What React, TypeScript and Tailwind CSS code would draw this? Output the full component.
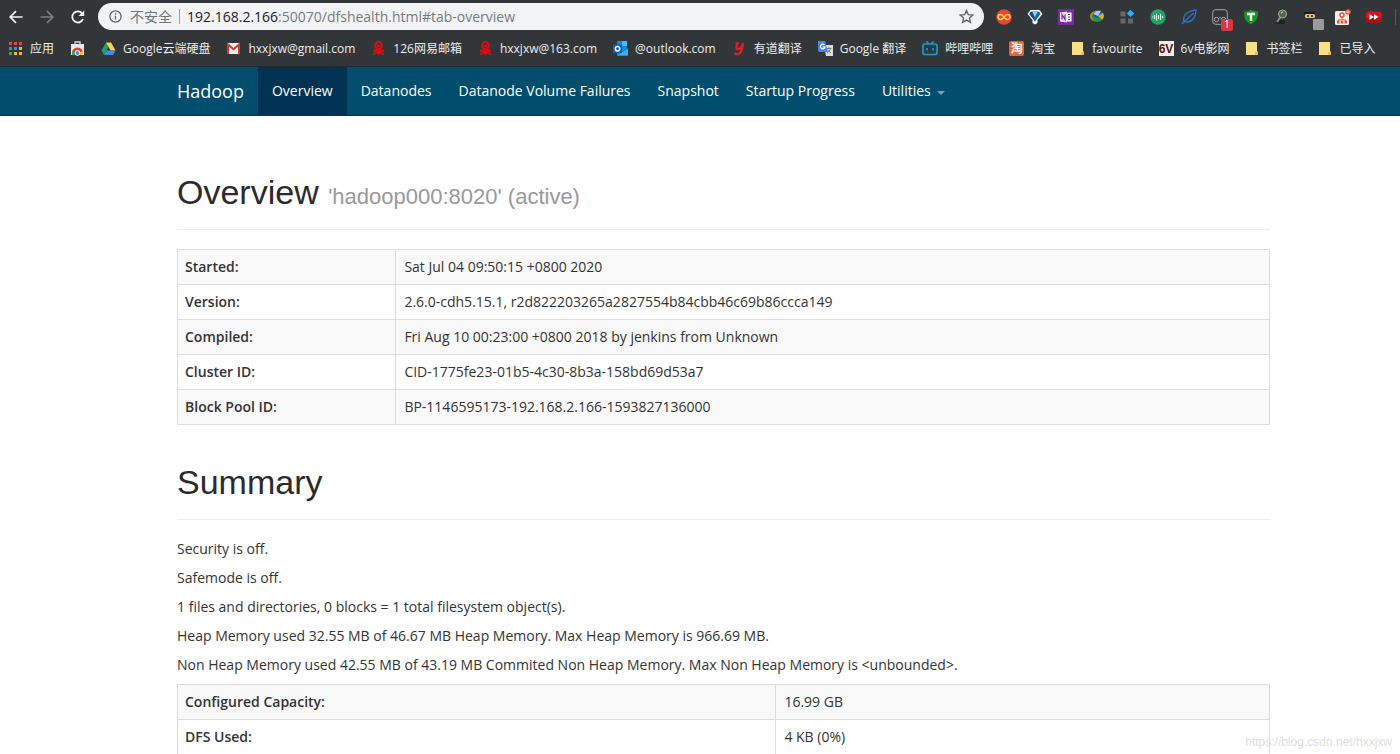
import type { ReactNode } from "react";

interface BookmarkProps {
  icon: ReactNode;
  label?: string;
}

interface InfoRow {
  name: string;
  value: string;
}

const overviewRows: InfoRow[] = [
  { name: "Started:", value: "Sat Jul 04 09:50:15 +0800 2020" },
  { name: "Version:", value: "2.6.0-cdh5.15.1, r2d822203265a2827554b84cbb46c69b86ccca149" },
  { name: "Compiled:", value: "Fri Aug 10 00:23:00 +0800 2018 by jenkins from Unknown" },
  { name: "Cluster ID:", value: "CID-1775fe23-01b5-4c30-8b3a-158bd69d53a7" },
  { name: "Block Pool ID:", value: "BP-1146595173-192.168.2.166-1593827136000" },
];

const summaryRows: InfoRow[] = [
  { name: "Configured Capacity:", value: "16.99 GB" },
  { name: "DFS Used:", value: "4 KB (0%)" },
];

const summaryLines = [
  "Security is off.",
  "Safemode is off.",
  "1 files and directories, 0 blocks = 1 total filesystem object(s).",
  "Heap Memory used 32.55 MB of 46.67 MB Heap Memory. Max Heap Memory is 966.69 MB.",
  "Non Heap Memory used 42.55 MB of 43.19 MB Commited Non Heap Memory. Max Non Heap Memory is <unbounded>.",
];

const navLinks = ["Datanodes", "Datanode Volume Failures", "Snapshot", "Startup Progress"];

export default function App() {
  return (
    <div className="flex h-screen flex-col overflow-hidden bg-white font-['Open_Sans','Noto_Sans_CJK_SC',sans-serif] text-[#333333]">
      <header className="border-b border-[#1f2a30] bg-[#323639]">
        <Toolbar />
        <BookmarksBar />
      </header>
      <NavBar />
      <main className="relative flex-1 overflow-hidden pt-[55px] pr-[130px] pl-[177px] text-sm">
        <h1 className="border-b border-[#eeeeee] pb-[15px] font-['Liberation_Sans',sans-serif] text-[34px] leading-[43px] text-[#2b2b2b]">
          Overview <small className="text-[22px] leading-none text-[#999999]">'hadoop000:8020' (active)</small>
        </h1>
        <InfoTable rows={overviewRows} nameWidth="w-1/5" />

        <h1 className="mt-[36px] border-b border-[#eeeeee] pb-[15px] font-['Liberation_Sans',sans-serif] text-[34px] leading-[43px] text-[#2b2b2b]">
          Summary
        </h1>
        <div className="mt-[19px] flex flex-col gap-[9px] leading-5">
          {summaryLines.map((line) => (
            <p key={line}>{line}</p>
          ))}
        </div>
        <InfoTable rows={summaryRows} nameWidth="w-[54.8%]" tight />

        <span className="absolute right-2 bottom-1 font-['Liberation_Sans',sans-serif] text-xs text-[#dedede]">
          https://blog.csdn.net/hxxjxw
        </span>
      </main>
    </div>
  );
}

const InfoTable = ({ rows, nameWidth, tight }: { rows: InfoRow[]; nameWidth: string; tight?: boolean }) => {
  return (
    <table className={`${tight ? "mt-[9px]" : "mt-[19px]"} w-full table-fixed border-collapse border border-[#dddddd]`}>
      <tbody>
        {rows.map((row) => (
          <tr key={row.name} className="h-[35px] odd:bg-[#f9f9f9]">
            <th scope="row" className={`${nameWidth} border border-[#dddddd] px-[7px] text-left font-semibold`}>
              {row.name}
            </th>
            <td className="border border-[#dddddd] px-2">{row.value}</td>
          </tr>
        ))}
      </tbody>
    </table>
  );
};

const NavBar = () => {
  return (
    <nav className="flex h-[49px] items-stretch border-b border-[#0a3550] bg-[#004d6e] pl-[177px] text-sm text-white">
      <a href="#hadoop" className="flex items-center pr-[14px] text-lg">
        Hadoop
      </a>
      <a href="#tab-overview" className="flex items-center bg-[#003253] px-[14px]">
        Overview
      </a>
      {navLinks.map((link) => (
        <a key={link} href="#tab" className="flex items-center pr-[13px] pl-[14px]">
          {link}
        </a>
      ))}
      <button type="button" className="flex items-center gap-[6px] px-[14px]">
        Utilities
        <svg width="8" height="4" viewBox="0 0 8 4" className="mt-1">
          <path d="M0 0h8L4 4z" fill="#8b9aa5" />
        </svg>
      </button>
    </nav>
  );
};

const Toolbar = () => {
  return (
    <div className="flex h-[33px] items-center">
      <div className="flex w-[98px] items-center gap-[15px] pl-2">
        <button type="button" aria-label="Back">
          <Arrow color="#f1f3f4" />
        </button>
        <button type="button" aria-label="Forward" className="rotate-180">
          <Arrow color="#7d8083" />
        </button>
        <button type="button" aria-label="Reload">
          <svg width="16" height="16" viewBox="0 0 16 16" fill="none" stroke="#f1f3f4" strokeWidth="1.8">
            <path d="M13 10.2A5.6 5.6 0 1 1 12.2 4.3L13.2 5.4" />
            <path d="M14.2 1.4v5.6H8.6z" fill="#f1f3f4" stroke="none" />
          </svg>
        </button>
      </div>
      <div className="flex h-[27px] flex-1 items-center rounded-full bg-[#f1f3f4] pr-[10px] pl-[11px] text-sm">
        <svg width="13" height="13" viewBox="0 0 13 13" fill="none" stroke="#5f6368" strokeWidth="1.3">
          <circle cx="6.5" cy="6.5" r="5.6" />
          <path d="M6.5 5.8v3.7M6.5 3.3v1.4" />
        </svg>
        <span className="ml-2 text-[#70757a]">不安全</span>
        <span className="mx-[7px] h-[15px] w-px bg-[#9aa0a6]" />
        <p className="flex-1 text-[#777b80]">
          <span className="text-[#202124]">192.168.2.166</span>:50070/dfshealth.html#tab-overview
        </p>
        <button type="button" aria-label="Bookmark this page">
          <svg width="15" height="15" viewBox="0 0 16 16" fill="none" stroke="#5f6368" strokeWidth="1.4">
            <path d="M8 1.5l1.9 4.500 4.900.4-3.700 3.200 1.100 4.700L8 11.800l-4.200 2.500 1.100-4.700L1.200 6.400l4.900-.4z" />
          </svg>
        </button>
      </div>
      <div className="ml-[5px] grid w-[400px] grid-cols-13 justify-items-center">
        <ExtensionIcons />
      </div>
      <span className="mr-1 ml-[6px] h-4 w-px bg-[#5a5e61]" />
    </div>
  );
};

const Arrow = ({ color }: { color: string }) => (
  <svg width="16" height="16" viewBox="0 0 16 16" fill="none" stroke={color} strokeWidth="1.7">
    <path d="M14.500 8H2.500M8 2.200L2.200 8L8 13.800" />
  </svg>
);

const ExtensionIcons = () => (
  <>
    <svg width="16" height="16" viewBox="0 0 16 16">
      <circle cx="8" cy="8" r="7.700" fill="#ee4438" />
      <path d="M8 8C6.500 6 5.700 5.500 4.600 5.500a2.500 2.500 0 0 0 0 5C5.700 10.500 6.500 10 8 8s2.300-2.500 3.400-2.500a2.500 2.500 0 0 1 0 5C10.300 10.500 9.500 10 8 8z" fill="none" stroke="#ffd84f" strokeWidth="1.500" />
    </svg>
    <svg width="16" height="16" viewBox="0 0 16 16">
      <path d="M3.500 1h9L15.500 5 10.500 11v3L8 15.500 5.500 14v-3L.5 5z" fill="#fff" />
      <path d="M4 2.500h8L13.500 5 8 12.500 2.500 5z" fill="#1c62b4" />
      <path d="M5.500 3h5L8 8z" fill="#8fd0f5" />
      <path d="M2.500 5L4 2.500 7.500 11z" fill="#103a78" />
    </svg>
    <svg width="16" height="16" viewBox="0 0 16 16">
      <path d="M0 0h16v16H0z" fill="#7b2b9f" />
      <path d="M8 3.500h5.500v9H8z" fill="#fff" />
      <path d="M10 5.500h2M10 8h2M10 10.500h2" stroke="#7b2b9f" />
      <path d="M2 3.500l7-1v11l-7-1z" fill="#f4eaf8" />
      <path d="M4 10.500v-5l3 5v-5" fill="none" stroke="#7b2b9f" strokeWidth="1.300" />
    </svg>
    <svg width="16" height="16" viewBox="0 0 16 16">
      <path d="M9 1.500C4 1 0 5 1 8.500c1 3 4 4 7 4L6 8z" fill="#a8852d" />
      <circle cx="9.500" cy="7" r="5.500" fill="#2459a5" />
      <path d="M4.500 5c1-3 5-4 7.500-3L9 7z" fill="#a8cbea" />
      <path d="M9 7l5-3c1.500 2 1 5-1 7z" fill="#d3b52c" />
      <path d="M3 6l3 2.500c3 .5 5 .5 7 2-2 2-4 2.500-7 2L3.500 10z" fill="#1d9b35" />
    </svg>
    <svg width="16" height="16" viewBox="0 0 16 16">
      <path d="M1.500 2.500h5v5h-5zM1.500 9.500h5v5h-5zM9 9.500h5v5H9z" fill="#65696d" />
      <path d="M11.500.7l3.700 3.700-3.700 3.700-3.700-3.700z" fill="#26b2f3" />
    </svg>
    <svg width="16" height="16" viewBox="0 0 16 16">
      <circle cx="8" cy="8" r="7.700" fill="#20a565" />
      <path d="M2.500 7.500v1M4.500 6v4M6.500 4.500v7M8.500 6v4M10.500 5v6M12.500 7v2" stroke="#d9f5e5" strokeWidth="1.100" />
    </svg>
    <svg width="16" height="16" viewBox="0 0 16 16" fill="none" stroke="#2d73bd" strokeWidth="1.400">
      <path d="M1 15C5 11 9 7 13 4M3 13C1 6 7 2 15 1c0 6-3 12-9 12-1.500 0-2-.5-3-1" />
    </svg>
    <span className="relative">
      <svg width="16" height="16" viewBox="0 0 16 16" fill="none" stroke="#a4a7a9">
        <rect x=".7" y=".7" width="14.600" height="14.600" rx="3" />
        <circle cx="4.500" cy="10.500" r="2.200" />
        <circle cx="11.500" cy="10.500" r="2.200" />
        <path d="M6.500 9.500c1-1 2-1 3 0" />
      </svg>
      <span className="absolute top-[10px] left-[9px] flex size-3 items-center justify-center rounded-[2px] bg-[#db363d] text-[10px] text-white">
        1
      </span>
    </span>
    <svg width="16" height="16" viewBox="0 0 16 16">
      <path d="M8 .5C10 2 12.500 2.500 15 2.500c0 6-1 10-7 13-6-3-7-7-7-13C3.500 2.500 6 2 8 .5z" fill="#139b21" />
      <path d="M4 5h8M8 5v7" stroke="#fff" strokeWidth="2.400" />
    </svg>
    <svg width="16" height="16" viewBox="0 0 16 16">
      <path d="M3 11h9v4H3z" fill="#1f2425" />
      <path d="M7.500 8L4 13" stroke="#89928c" strokeWidth="2" />
      <circle cx="9.500" cy="5" r="4" fill="#50694b" stroke="#a1b396" />
      <path d="M8 4l2-1" stroke="#d2dfc9" />
    </svg>
    <span className="relative">
      <svg width="16" height="16" viewBox="0 0 16 16">
        <path d="M0 4h11" stroke="#191b1c" strokeWidth="2" />
        <rect x="1" y="5" width="10" height="4" rx="1.500" fill="#e9bb7c" />
        <path d="M3 7h2M7 7h2" stroke="#222" strokeWidth="1.500" />
      </svg>
      <span className="absolute top-[10px] left-[9px] size-[11px] rounded-[1px] bg-[#999a9b]" />
    </span>
    <svg width="16" height="16" viewBox="0 0 16 16">
      <rect x="0" y="2" width="14" height="14" rx="1.500" fill="#f9efea" />
      <circle cx="7" cy="6" r="2" fill="none" stroke="#dd5636" strokeWidth="1.500" />
      <path d="M7 8v3M3 13v-2h8v2" fill="none" stroke="#dd5636" />
      <path d="M2 12h2.500v2.500H2zM5.700 12h2.500v2.500H5.700zM9.500 12H12v2.500H9.500z" fill="#dd5636" />
      <circle cx="13" cy="3" r="2.800" fill="#f15837" />
      <path d="M11.500 3h3M13 1.500v3" stroke="#fff" strokeWidth=".8" />
    </svg>
    <svg width="16" height="16" viewBox="0 0 16 16">
      <rect x="0" y="2.500" width="16" height="11" rx="3.500" fill="#d9121b" />
      <path d="M0 9h16v1a3.500 3.500 0 0 1-3.500 3.500h-9A3.500 3.500 0 0 1 0 10z" fill="#b00c15" />
      <path d="M3.500 5.200L8 8l-4.500 2.800zM8 5.200L12.500 8 8 10.800z" fill="#fff" />
    </svg>
  </>
);

const BookmarksBar = () => {
  return (
    <div className="flex h-[33px] items-center gap-4 pb-[2px] pl-2 text-xs text-[#eceded]">
      <Bookmark icon={<AppsIcon />} label="应用" />
      <Bookmark icon={<StoreIcon />} />
      <Bookmark icon={<DriveIcon />} label="Google云端硬盘" />
      <Bookmark icon={<GmailIcon />} label="hxxjxw@gmail.com" />
      <Bookmark icon={<NeteaseIcon />} label="126网易邮箱" />
      <Bookmark icon={<NeteaseIcon />} label="hxxjxw@163.com" />
      <Bookmark icon={<OutlookIcon />} label="@outlook.com" />
      <Bookmark icon={<YoudaoIcon />} label="有道翻译" />
      <Bookmark icon={<TranslateIcon />} label="Google 翻译" />
      <Bookmark icon={<BilibiliIcon />} label="哔哩哔哩" />
      <Bookmark
        icon={<span className="flex size-[15px] items-center justify-center rounded-[2px] bg-[#ee6229] text-xs font-bold text-white">淘</span>}
        label="淘宝"
      />
      <Bookmark icon={<FolderIcon />} label="favourite" />
      <Bookmark
        icon={<span className="flex size-[15px] items-center justify-center bg-[#f5eee5] font-['Liberation_Sans',sans-serif] text-xs font-bold text-[#5b1111]">6V</span>}
        label="6v电影网"
      />
      <Bookmark icon={<FolderIcon />} label="书签栏" />
      <Bookmark icon={<FolderIcon />} label="已导入" />
    </div>
  );
};

const Bookmark = ({ icon, label }: BookmarkProps) => (
  <a href="#bookmark" aria-label={label ?? "Web Store"} className="flex items-center gap-[7px] whitespace-nowrap">
    {icon}
    {label}
  </a>
);

const AppsIcon = () => (
  <svg width="15" height="15" viewBox="0 0 15 15">
    <path d="M1 1h3v3H1zM6 1h3v3H6zM11 1h3v3h-3z" fill="#e8453c" />
    <path d="M1 6h3v3H1z" fill="#35a853" />
    <path d="M6 6h3v3H6z" fill="#4285f4" />
    <path d="M11 6h3v3h-3zM6 11h3v3H6zM11 11h3v3h-3z" fill="#f9b928" />
    <path d="M1 11h3v3H1z" fill="#35a853" />
  </svg>
);

const StoreIcon = () => (
  <svg width="15" height="15" viewBox="0 0 15 15">
    <path d="M5 3V1h5v2" fill="none" stroke="#d7d9da" strokeWidth="1.300" />
    <path d="M1 3h13v11H1z" fill="#e9e9ea" />
    <path d="M2 12a5.500 5.500 0 0 1 11 0z" fill="#e34133" />
    <path d="M2 9.500V14h5z" fill="#31a852" />
    <path d="M13 9.500V14H7z" fill="#fbc116" />
    <circle cx="7.500" cy="12" r="2.400" fill="#4285f4" stroke="#fff" />
  </svg>
);

const DriveIcon = () => (
  <svg width="15" height="15" viewBox="0 0 15 15">
    <path d="M5 1.500L.5 9.500 3 14l4.500-8z" fill="#1fa463" />
    <path d="M5 1.500h5L14.500 9.500h-5z" fill="#ffd04b" />
    <path d="M5.500 9.500h9L12 14H3z" fill="#4688f1" />
  </svg>
);

const GmailIcon = () => (
  <svg width="15" height="15" viewBox="0 0 15 15">
    <path d="M1 2h13v11H1z" fill="#f2eeee" />
    <path d="M2 13V3.500l5.500 4.700L13 3.500V13" fill="none" stroke="#d9372d" strokeWidth="2" />
  </svg>
);

const NeteaseIcon = () => (
  <svg width="15" height="15" viewBox="0 0 15 15" fill="none" stroke="#e30b13">
    <circle cx="7.500" cy="4.500" r="3.400" strokeWidth="2" />
    <path d="M5.500 4l4 1M5.500 5.500l4-1.500" strokeWidth="1.200" />
    <path d="M5 8c1 1.500 4 1.500 5 0M7.500 8v5M2 9.500c3 0 6 1 5 4M13 9.500c-3 0-6 1-5 4M2 13c2 0 3-.5 4-2M13 13c-2 0-3-.5-4-2" strokeWidth="1.800" />
  </svg>
);

const OutlookIcon = () => (
  <svg width="15" height="15" viewBox="0 0 15 15">
    <path d="M4 0h10v7l1 1v6.500H4z" fill="#1687d9" />
    <path d="M9 0h5v5H9z" fill="#45bdf2" />
    <path d="M4 14.500L15 8v6.500z" fill="#36b5ef" />
    <path d="M0 3.500h9V12H0z" fill="#0764b4" />
    <circle cx="4.500" cy="7.700" r="2.200" fill="none" stroke="#fff" strokeWidth="1.500" />
  </svg>
);

const YoudaoIcon = () => (
  <svg width="15" height="15" viewBox="0 0 15 15" fill="none" stroke="#e81c23" strokeWidth="2.300">
    <path d="M3.500 2.500h2C4 6 4 8 6 8s4-2 5-6c-.5 5-2 10-4.500 11-1.500.5-3 0-3.500-1" />
  </svg>
);

const TranslateIcon = () => (
  <svg width="15" height="15" viewBox="0 0 15 15">
    <path d="M6 4h9v11H8z" fill="#dcdfe2" />
    <path d="M8.500 7.500h5M11 6v1.500M12.500 7.500c-.5 2-2 3.500-3.500 4.500M9.500 9l3.500 3" fill="none" stroke="#777d82" />
    <path d="M0 0h7l3 11H1L0 10z" fill="#4a83ef" />
    <path d="M6.500 4A2.300 2.300 0 1 0 7 6H4.700" fill="none" stroke="#fff" strokeWidth="1.200" />
  </svg>
);

const BilibiliIcon = () => (
  <svg width="16" height="15" viewBox="0 0 16 15" fill="none" stroke="#159bd0" strokeWidth="1.700">
    <path d="M4.500.5L7 3M11.500.5L9 3" />
    <rect x="1" y="3" width="14" height="10.500" rx="2" />
    <path d="M5 7v2.500M11 7v2.500" />
  </svg>
);

const FolderIcon = () => (
  <svg width="14" height="15" viewBox="0 0 14 15">
    <path d="M1 1h11v9l1 1v3H1z" fill="#f9df85" />
    <path d="M10 11h3v3h-3z" fill="#e9bd4c" />
  </svg>
);
